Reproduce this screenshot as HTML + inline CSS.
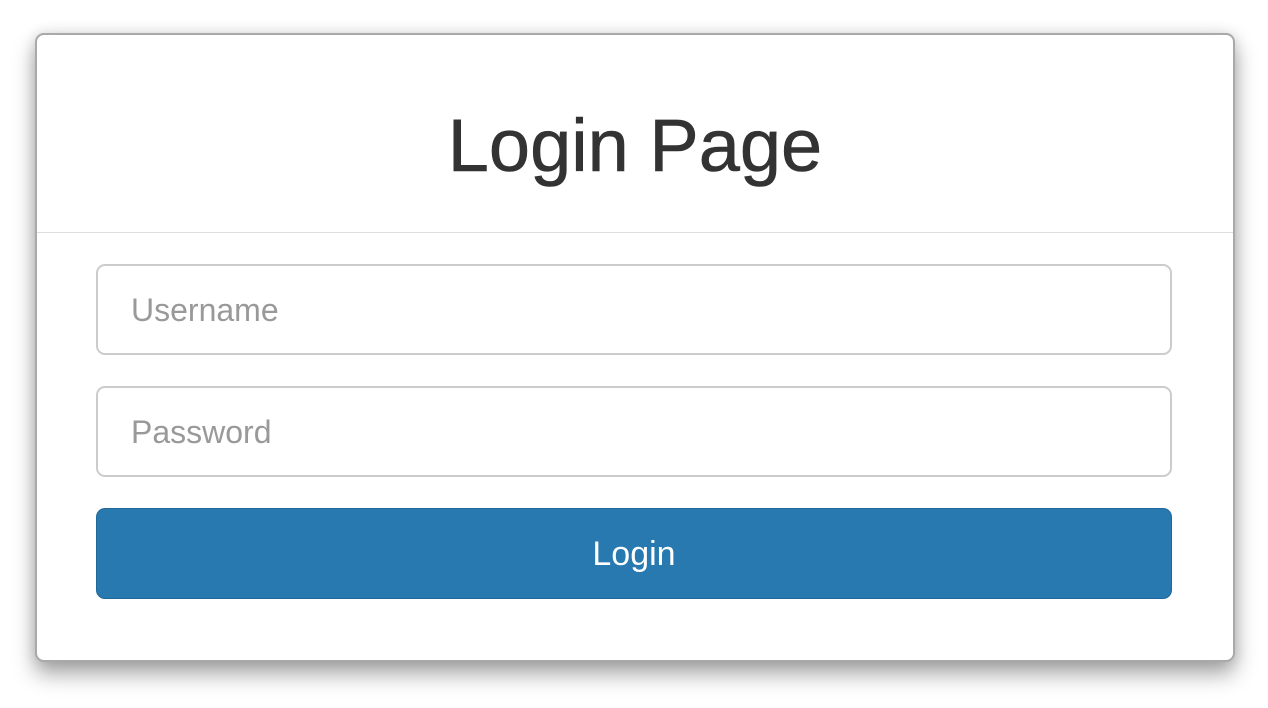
<!DOCTYPE html>
<html><head><style>
body{margin:0;width:1268px;height:708px;background:#fff;font-family:"Liberation Sans",sans-serif;position:relative;overflow:hidden}
.card{position:absolute;left:35px;top:33px;width:1196px;height:625px;border:2px solid #a9a9a9;border-radius:9px;background:#fff;box-shadow:0 12px 22px rgba(0,0,0,.35),0 0 14px rgba(0,0,0,.12)}
h1{position:absolute;left:0;right:0;top:0;height:197px;margin:0;text-align:center;font-weight:normal;font-size:74px;color:#333;line-height:222px;-webkit-text-stroke:0.6px #333}
.hr{position:absolute;left:0;right:0;top:197px;height:1px;background:#ddd}
.in{position:absolute;left:59px;width:1072px;height:87px;border:2px solid #ccc;border-radius:9px;box-sizing:content-box;font-size:32px;color:#999;line-height:89px;text-indent:33px}
.btn{position:absolute;left:59px;top:473px;width:1076px;height:91px;background:#2779b0;border:1px solid #22679a;box-sizing:border-box;border-radius:9px;color:#fff;font-size:34px;text-align:center;line-height:91px}
</style></head><body>
<div class="card">
<h1>Login Page</h1>
<div class="hr"></div>
<div class="in" style="top:229px">Username</div>
<div class="in" style="top:351px">Password</div>
<div class="btn">Login</div>
</div>
</body></html>
